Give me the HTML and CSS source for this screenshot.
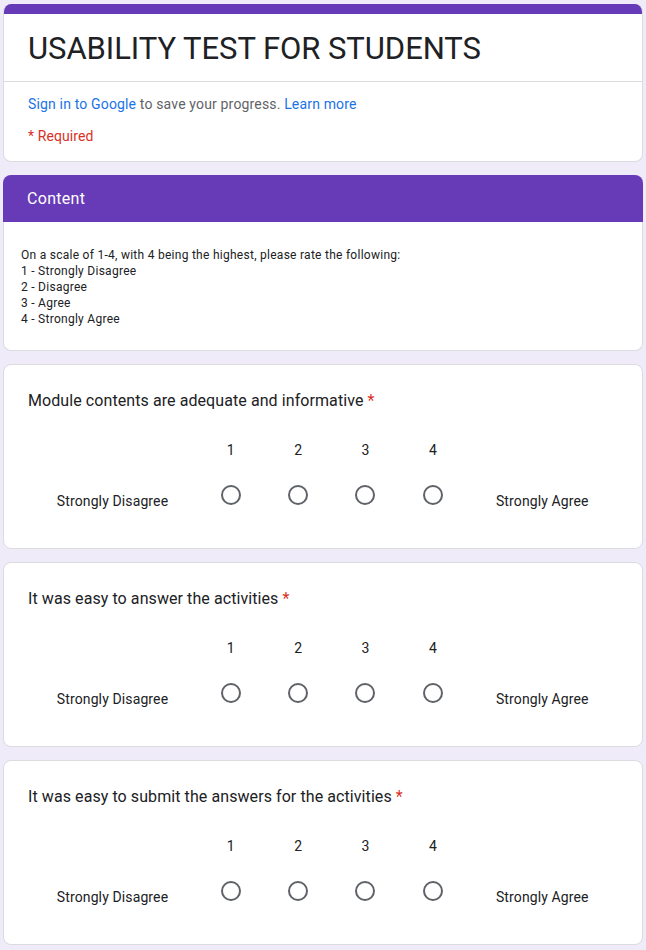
FILE: index.html
```html
<!DOCTYPE html>
<html lang="en">
<head>
<meta charset="utf-8">
<title>USABILITY TEST FOR STUDENTS</title>
<link rel="stylesheet" href="styles.css">
</head>
<body>
<main class="form">
  <section class="card title-card">
    <div class="title-bar"></div>
    <div class="title-section">
      <h1 class="form-title">USABILITY TEST FOR STUDENTS</h1>
    </div>
    <div class="title-meta">
      <p class="signin"><a class="link" href="#">Sign in to Google</a> to save your progress. <a class="link" href="#">Learn more</a></p>
      <p class="required">* Required</p>
    </div>
  </section>

  <section class="section-card">
    <div class="section-header">Content</div>
    <div class="section-body">
      <p class="section-desc">On a scale of 1-4, with 4 being the highest, please rate the following:<br>1 - Strongly Disagree<br>2 - Disagree<br>3 - Agree<br>4 - Strongly Agree</p>
    </div>
  </section>

  <section class="card question">
    <div class="q-title">Module contents are adequate and informative <span class="star">*</span></div>
    <div class="scale">
      <span></span><span class="num">1</span><span class="num">2</span><span class="num">3</span><span class="num">4</span><span></span>
    </div>
    <div class="scale scale-radios">
      <span class="end-label">Strongly Disagree</span>
      <span class="cell"><span class="radio"></span></span>
      <span class="cell"><span class="radio"></span></span>
      <span class="cell"><span class="radio"></span></span>
      <span class="cell"><span class="radio"></span></span>
      <span class="end-label">Strongly Agree</span>
    </div>
  </section>

  <section class="card question">
    <div class="q-title">It was easy to answer the activities <span class="star">*</span></div>
    <div class="scale">
      <span></span><span class="num">1</span><span class="num">2</span><span class="num">3</span><span class="num">4</span><span></span>
    </div>
    <div class="scale scale-radios">
      <span class="end-label">Strongly Disagree</span>
      <span class="cell"><span class="radio"></span></span>
      <span class="cell"><span class="radio"></span></span>
      <span class="cell"><span class="radio"></span></span>
      <span class="cell"><span class="radio"></span></span>
      <span class="end-label">Strongly Agree</span>
    </div>
  </section>

  <section class="card question">
    <div class="q-title">It was easy to submit the answers for the activities <span class="star">*</span></div>
    <div class="scale">
      <span></span><span class="num">1</span><span class="num">2</span><span class="num">3</span><span class="num">4</span><span></span>
    </div>
    <div class="scale scale-radios">
      <span class="end-label">Strongly Disagree</span>
      <span class="cell"><span class="radio"></span></span>
      <span class="cell"><span class="radio"></span></span>
      <span class="cell"><span class="radio"></span></span>
      <span class="cell"><span class="radio"></span></span>
      <span class="end-label">Strongly Agree</span>
    </div>
  </section>
</main>
</body>
</html>
```
FILE: styles.css
```css
* { box-sizing: border-box; }

html, body {
  margin: 0;
  padding: 0;
  background: #f0ebf8;
}

body {
  font-family: Roboto, "Liberation Sans", Arial, sans-serif;
  color: #202124;
}

.form {
  width: 640px;
  margin: 0 0 0 3px;
  padding-top: 4px;
  display: flex;
  flex-direction: column;
  gap: 13px;
}

.card {
  background: #fff;
  border: 1px solid #dadce0;
  border-radius: 8px;
}

/* Title card */
.title-card {
  border-top: none;
  overflow: hidden;
  height: 158px;
}

.title-bar {
  height: 10px;
  background: #673ab7;
}

.title-section {
  height: 68px;
  padding: 15px 24px 13px;
  border-bottom: 1px solid #dadce0;
}

.form-title {
  margin: 0;
  font-family: Roboto, "Liberation Sans", sans-serif;
  font-weight: 400;
  font-size: 31px;
  line-height: 40px;
  color: #202124;
  letter-spacing: -0.05px;
}

.title-meta {
  padding: 12px 24px 0;
}

.signin {
  margin: 0;
  font-size: 14px;
  line-height: 20px;
  letter-spacing: 0.16px;
  color: #5f6368;
}

.link {
  color: #1a73e8;
  text-decoration: none;
}

.required {
  margin: 12px 0 0;
  font-size: 14px;
  line-height: 20px;
  letter-spacing: 0.1px;
  color: #d93025;
}

/* Section card */
.section-header {
  height: 47px;
  background: #673ab7;
  border-radius: 8px 8px 0 0;
  color: #fff;
  font-size: 16px;
  line-height: 24px;
  padding: 12px 24px 11px;
  letter-spacing: 0.3px;
}

.section-body {
  background: #fff;
  border: 1px solid #dadce0;
  border-top: none;
  border-radius: 0 0 8px 8px;
  padding: 25px 17px 23px;
}

.section-desc {
  margin: 0;
  font-size: 12px;
  line-height: 16px;
  letter-spacing: 0.27px;
  color: #202124;
}

/* Question card */
.question {
  height: 185px;
  padding: 24px 24px 28px;
}

.q-title {
  font-size: 16px;
  line-height: 24px;
  letter-spacing: 0.08px;
  color: #202124;
}

.star {
  color: #d93025;
}

.scale {
  display: grid;
  grid-template-columns: 169px repeat(4, 67.4px) 1fr;
  margin-top: 27px;
  font-size: 14px;
  line-height: 20px;
}

.num {
  text-align: center;
}

.scale-radios {
  margin-top: 11px;
  height: 48px;
  align-items: center;
}

.end-label {
  text-align: center;
  padding-top: 12px;
  letter-spacing: 0.12px;
}

.cell {
  display: flex;
  justify-content: center;
  align-items: center;
  height: 48px;
}

.radio {
  width: 20px;
  height: 20px;
  border: 2px solid #5f6368;
  border-radius: 50%;
}
```
